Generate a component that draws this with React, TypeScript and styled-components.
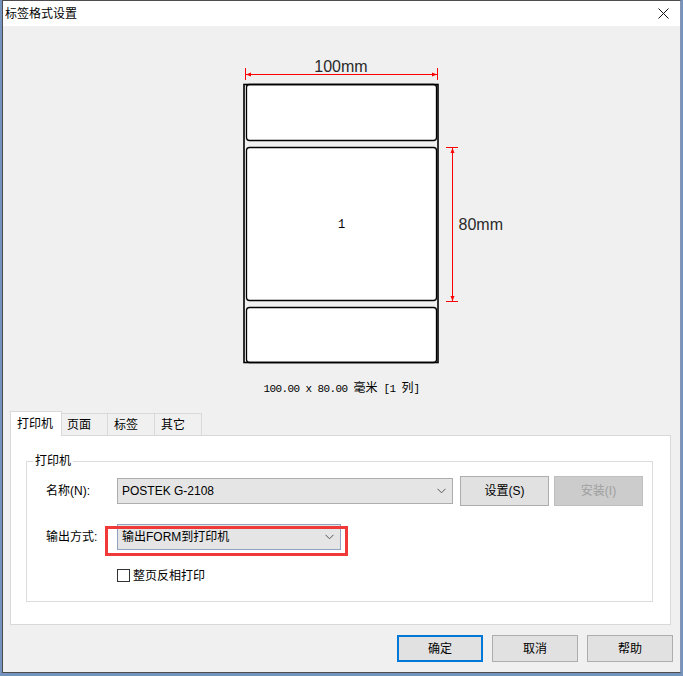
import React from "react";
import styled, { createGlobalStyle } from "styled-components";

const UI = `"Liberation Sans", "Noto Sans CJK SC", sans-serif`;

const Global = createGlobalStyle`
  html, body { margin: 0; padding: 0; }
  body {
    background: #7494bf;
    width: 683px;
    height: 676px;
    overflow: hidden;
    font-family: ${UI};
    font-size: 12px;
    color: #000;
  }
`;

const Frame = styled.div`
  margin-left: 2px;
  width: 679px;
  height: 673px;
  box-sizing: border-box;
  border: 1px solid #4d4d4d;
  border-right-color: #8797b0;
  background: #f0f0f0;
  display: flex;
  flex-direction: column;
`;

const TitleBar = styled.div`
  height: 25px;
  flex: none;
  background: #fff;
  display: flex;
  align-items: center;
  justify-content: space-between;
  padding: 0 11px 0 2px;
  line-height: 16px;
`;

const Title = styled.span`
  font-size: 12px;
`;

const Body = styled.div`
  flex: 1;
  display: flex;
  flex-direction: column;
  align-items: center;
  padding-top: 24px;
`;

const Caption = styled.div`
  margin-top: 14px;
  height: 14px;
  line-height: 14px;
  font-family: "Liberation Mono", "Noto Sans CJK SC", monospace;
  font-size: 11px;
  letter-spacing: -0.6px;
  white-space: pre;
  color: #000;
`;

const Cjk = styled.span`
  font-family: "Noto Sans CJK SC", sans-serif;
  font-size: 12px;
  letter-spacing: 0;
`;

const TabArea = styled.div`
  align-self: stretch;
  padding: 0 9px 0 7px;
  margin-top: 17px;
`;

const TabStrip = styled.div`
  display: flex;
  align-items: flex-end;
  height: 24px;
  position: relative;
  z-index: 1;
`;

const Tab = styled.div<{ $active?: boolean }>`
  box-sizing: border-box;
  width: ${(p) => (p.$active ? 52 : 48)}px;
  height: ${(p) => (p.$active ? 25 : 22)}px;
  margin-left: ${(p) => (p.$active ? 0 : -1)}px;
  margin-right: ${(p) => (p.$active ? -1 : 0)}px;
  margin-bottom: ${(p) => (p.$active ? -1 : 0)}px;
  border: 1px solid #d9d9d9;
  border-bottom: none;
  background: ${(p) => (p.$active ? "#fff" : "#f0f0f0")};
  position: relative;
  z-index: ${(p) => (p.$active ? 2 : 1)};
  padding-left: 6px;
  display: flex;
  align-items: center;
  line-height: 16px;
`;

const Panel = styled.div`
  box-sizing: border-box;
  height: 190px;
  background: #fff;
  border: 1px solid #d9d9d9;
  padding: 25px 17px 0 15px;
`;

const Group = styled.div`
  position: relative;
  border: 1px solid #dcdcdc;
  padding: 14px 0 19px 19px;
`;

const Legend = styled.span`
  position: absolute;
  top: -9px;
  left: 6px;
  padding: 0 2px;
  background: #fff;
  line-height: 16px;
`;

const Row = styled.div<{ $h: number; $mt?: number; $indent?: number }>`
  display: flex;
  align-items: center;
  height: ${(p) => p.$h}px;
  margin-top: ${(p) => p.$mt ?? 0}px;
  padding-left: ${(p) => p.$indent ?? 0}px;
`;

const FieldLabel = styled.span`
  width: 71px;
  flex: none;
  line-height: 16px;
`;

const ComboWrap = styled.div`
  position: relative;
  flex: none;
`;

const Combo = styled.div<{ $w: number; $focus?: boolean }>`
  box-sizing: border-box;
  width: ${(p) => p.$w}px;
  height: 26px;
  background: #e5e5e5;
  border: 1px solid ${(p) => (p.$focus ? "#8fa3c0" : "#adadad")};
  display: flex;
  align-items: center;
  justify-content: space-between;
  padding: 0 6px 0 4px;
  line-height: 16px;
`;

const Annotation = styled.div`
  position: absolute;
  left: -12px;
  top: 2px;
  right: -7px;
  bottom: -6px;
  border: 3px solid #f03a3a;
  pointer-events: none;
`;

const Button = styled.div<{
  $w: number;
  $h: number;
  $ml?: number;
  $variant?: "normal" | "default" | "disabled";
}>`
  box-sizing: border-box;
  width: ${(p) => p.$w}px;
  height: ${(p) => p.$h}px;
  margin-left: ${(p) => p.$ml ?? 0}px;
  flex: none;
  display: flex;
  align-items: center;
  justify-content: center;
  line-height: 16px;
  background: ${(p) => (p.$variant === "disabled" ? "#cccccc" : "#e1e1e1")};
  color: ${(p) => (p.$variant === "disabled" ? "#a0a0a0" : "#000")};
  border: ${(p) =>
    p.$variant === "default"
      ? "2px solid #0078d7"
      : p.$variant === "disabled"
      ? "1px solid #bfbfbf"
      : "1px solid #adadad"};
`;

const CheckBox = styled.span`
  box-sizing: border-box;
  width: 13px;
  height: 13px;
  border: 1px solid #333;
  background: #fff;
  flex: none;
`;

const CheckLabel = styled.span`
  margin-left: 3px;
  line-height: 16px;
`;

const Footer = styled.div`
  align-self: stretch;
  display: flex;
  justify-content: flex-end;
  gap: 9px;
  margin-top: 10px;
  padding-right: 7px;
`;

const Chevron = () => (
  <svg width="9" height="6" viewBox="0 0 9 6">
    <polyline points="0.5,0.8 4.5,4.8 8.5,0.8" fill="none" stroke="#555" strokeWidth="1" />
  </svg>
);

const CloseIcon = () => (
  <svg width="11" height="11" viewBox="0 0 11 11">
    <line x1="0.5" y1="0.5" x2="10.5" y2="10.5" stroke="#111" strokeWidth="1" />
    <line x1="10.5" y1="0.5" x2="0.5" y2="10.5" stroke="#111" strokeWidth="1" />
  </svg>
);

const RED = "#ff0000";

const LabelPreview = () => (
  <svg width="331" height="316" viewBox="0 0 331 316">
    {/* width dimension */}
    <line x1="69.5" y1="24.5" x2="261.5" y2="24.5" stroke={RED} strokeWidth="1" />
    <line x1="69.5" y1="18" x2="69.5" y2="30" stroke={RED} strokeWidth="1" />
    <line x1="261.5" y1="18" x2="261.5" y2="30" stroke={RED} strokeWidth="1" />
    <polygon points="70,24.5 75,22.5 75,26.5" fill={RED} />
    <polygon points="261,24.5 256,22.5 256,26.5" fill={RED} />
    <text
      x="165"
      y="21.5"
      textAnchor="middle"
      fontFamily="Liberation Sans, sans-serif"
      fontSize="16"
      fill="#2a2a2a"
    >
      100mm
    </text>

    {/* labels */}
    <rect x="70.5" y="34.5" width="190" height="56" rx="3" fill="#fff" stroke="#000" strokeWidth="1.3" />
    <rect x="70.5" y="97.5" width="190" height="153" rx="3" fill="#fff" stroke="#000" strokeWidth="1.3" />
    <rect x="70.5" y="257.5" width="190" height="55" rx="3" fill="#fff" stroke="#000" strokeWidth="1.3" />
    <rect x="68" y="34.5" width="194" height="278" fill="none" stroke="#000" strokeWidth="1.6" />
    <text
      x="165.5"
      y="178"
      textAnchor="middle"
      fontFamily="Liberation Mono, monospace"
      fontSize="12"
      fill="#000"
    >
      1
    </text>

    {/* height dimension */}
    <line x1="276.5" y1="97.5" x2="276.5" y2="251.5" stroke={RED} strokeWidth="1" />
    <line x1="270" y1="97.5" x2="282" y2="97.5" stroke={RED} strokeWidth="1" />
    <line x1="270" y1="251.5" x2="282" y2="251.5" stroke={RED} strokeWidth="1" />
    <polygon points="276.5,98 274.5,103 278.5,103" fill={RED} />
    <polygon points="276.5,251 274.5,246 278.5,246" fill={RED} />
    <text
      x="282.5"
      y="180"
      fontFamily="Liberation Sans, sans-serif"
      fontSize="16"
      fill="#2a2a2a"
    >
      80mm
    </text>
  </svg>
);

export default function App() {
  return (
    <>
      <Global />
      <Frame>
        <TitleBar>
          <Title>标签格式设置</Title>
          <CloseIcon />
        </TitleBar>
        <Body>
          <LabelPreview />
          <Caption>
            100.00 x 80.00 <Cjk>毫米</Cjk> [1 <Cjk>列</Cjk>]
          </Caption>
          <TabArea>
            <TabStrip>
              <Tab $active>打印机</Tab>
              <Tab>页面</Tab>
              <Tab>标签</Tab>
              <Tab>其它</Tab>
            </TabStrip>
            <Panel>
              <Group>
                <Legend>打印机</Legend>
                <Row $h={30}>
                  <FieldLabel>名称(N):</FieldLabel>
                  <ComboWrap>
                    <Combo $w={336}>
                      <span>POSTEK G-2108</span>
                      <Chevron />
                    </Combo>
                  </ComboWrap>
                  <Button $w={89} $h={30} $ml={7}>
                    设置(S)
                  </Button>
                  <Button $w={89} $h={30} $ml={5} $variant="disabled">
                    安装(I)
                  </Button>
                </Row>
                <Row $h={26} $mt={18}>
                  <FieldLabel>输出方式:</FieldLabel>
                  <ComboWrap>
                    <Combo $w={224} $focus>
                      <span>输出FORM到打印机</span>
                      <Chevron />
                    </Combo>
                    <Annotation />
                  </ComboWrap>
                </Row>
                <Row $h={13} $mt={19} $indent={71}>
                  <CheckBox />
                  <CheckLabel>整页反相打印</CheckLabel>
                </Row>
              </Group>
            </Panel>
          </TabArea>
          <Footer>
            <Button $w={86} $h={27} $variant="default">
              确定
            </Button>
            <Button $w={86} $h={27}>
              取消
            </Button>
            <Button $w={86} $h={27}>
              帮助
            </Button>
          </Footer>
        </Body>
      </Frame>
    </>
  );
}
